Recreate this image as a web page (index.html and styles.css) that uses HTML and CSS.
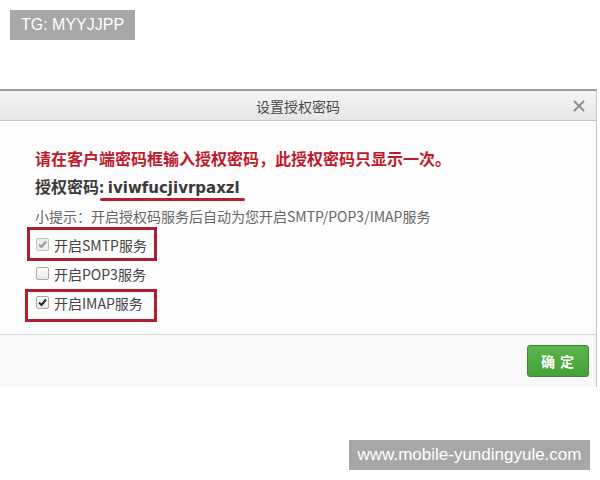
FILE: index.html
```html
<!DOCTYPE html>
<html lang="zh">
<head>
<meta charset="utf-8">
<link rel="stylesheet" href="styles.css">
</head>
<body>
<div class="wm wm-top">TG: MYYJJPP</div>
<div class="dialog">
  <div class="dlg-head">
    <span class="dlg-title">设置授权密码</span>
    <svg class="close" width="12" height="12" viewBox="0 0 12 12"><path d="M1 1 L11 11 M11 1 L1 11" stroke="#8a8a8a" stroke-width="1.8" fill="none"/></svg>
  </div>
  <div class="dlg-body">
    <div class="warn">请在客户端密码框输入授权密码，此授权密码只显示一次。</div>
    <div class="code">授权密码: <span class="code-val">iviwfucjivrpaxzl</span></div>
    <div class="tip">小提示：开启授权码服务后自动为您开启SMTP/POP3/IMAP服务</div>
    <div class="opt"><span class="cb cb-dis"><svg width="11" height="11" viewBox="0 0 11 11"><path d="M2 5.5 L4.5 8 L9 2.5" stroke="#9a9a9a" stroke-width="2" fill="none"/></svg></span>开启SMTP服务</div>
    <div class="opt"><span class="cb"></span>开启POP3服务</div>
    <div class="opt"><span class="cb"><svg width="11" height="11" viewBox="0 0 11 11"><path d="M2 5.5 L4.5 8 L9 2.5" stroke="#222" stroke-width="2" fill="none"/></svg></span>开启IMAP服务</div>
  </div>
  <div class="dlg-foot">
    <button class="ok">确 定</button>
  </div>
</div>
<div class="mark-line"></div>
<div class="mark-box mark-1"></div>
<div class="mark-box mark-2"></div>
<div class="wm wm-bottom">www.mobile-yundingyule.com</div>
</body>
</html>
```
FILE: styles.css
```css
html, body {
  margin: 0;
  padding: 0;
  background: #ffffff;
  font-family: "Noto Sans CJK SC", "Noto Sans", sans-serif;
}
body {
  width: 600px;
  height: 480px;
  position: relative;
  overflow: hidden;
  padding-top: 89px;
  box-sizing: border-box;
}
.wm {
  position: absolute;
  background: #a7a7a7;
  color: #ffffff;
  font-family: "Liberation Sans", Arial, sans-serif;
  font-size: 16px;
  height: 30px;
  line-height: 30px;
  text-align: center;
}
.wm-top { left: 10px; top: 10px; width: 125px; }
.wm-bottom { left: 349px; top: 440px; width: 241px; font-size: 17px; }

.dialog {
  width: 597px;
  border-top: 2px solid #9c9c9c;
  border-right: 1px solid #c4c4c4;
  box-sizing: border-box;
  background: #fdfdfd;
}
.dlg-head {
  height: 29px;
  background: linear-gradient(#f4f4f4, #e6e6e6);
  border-bottom: 1px solid #c6c6c6;
  display: flex;
  align-items: center;
  justify-content: center;
  position: relative;
}
.dlg-title {
  font-size: 14px;
  color: #4a4a4a;
}
.close {
  position: absolute;
  right: 11px;
  top: 9px;
}
.dlg-body {
  padding: 23px 0 17px 35px;
}
.warn {
  font-size: 16px;
  line-height: 28px;
  font-weight: bold;
  color: #bf1a2c;
}
.code {
  font-size: 16px;
  line-height: 28px;
  font-weight: bold;
  color: #3a3a3a;
}
.code-val {
  font-family: "DejaVu Sans", "Noto Sans CJK SC", sans-serif;
  font-size: 15px;
}
.tip {
  font-size: 14px;
  line-height: 28px;
  color: #666666;
}
.opt {
  height: 29px;
  display: flex;
  align-items: center;
  font-size: 14px;
  color: #444444;
}
.cb {
  width: 11px;
  height: 11px;
  border: 1px solid #a8a8a8;
  border-radius: 2px;
  background: linear-gradient(#ffffff, #e9e9e9);
  margin: 0 5px 0 1px;
  display: flex;
  align-items: center;
  justify-content: center;
}
.cb-dis { background: #eeeeee; border-color: #c2c2c2; }
.dlg-foot {
  border-top: 1px solid #d8d8d8;
  background: #f8f8f8;
  height: 53px;
  box-sizing: border-box;
  display: flex;
  justify-content: flex-end;
  align-items: flex-start;
  padding: 10px 7px 0 0;
}
.ok {
  width: 62px;
  height: 32px;
  border: 1px solid #3a8b2f;
  border-radius: 3px;
  background: linear-gradient(#5cb54e, #43a037);
  color: #ffffff;
  font-family: "Noto Sans CJK SC", sans-serif;
  font-weight: bold;
  font-size: 14px;
  letter-spacing: 1px;
  padding: 0;
}
.mark-line {
  position: absolute;
  left: 100px;
  top: 198px;
  width: 145px;
  height: 3px;
  border-radius: 2px;
  background: #b61f2e;
}
.mark-box {
  position: absolute;
  border: 3px solid #b21e2d;
  box-sizing: border-box;
}
.mark-1 { left: 27px; top: 227px; width: 130px; height: 34px; }
.mark-2 { left: 25px; top: 289px; width: 132px; height: 33px; }
```
